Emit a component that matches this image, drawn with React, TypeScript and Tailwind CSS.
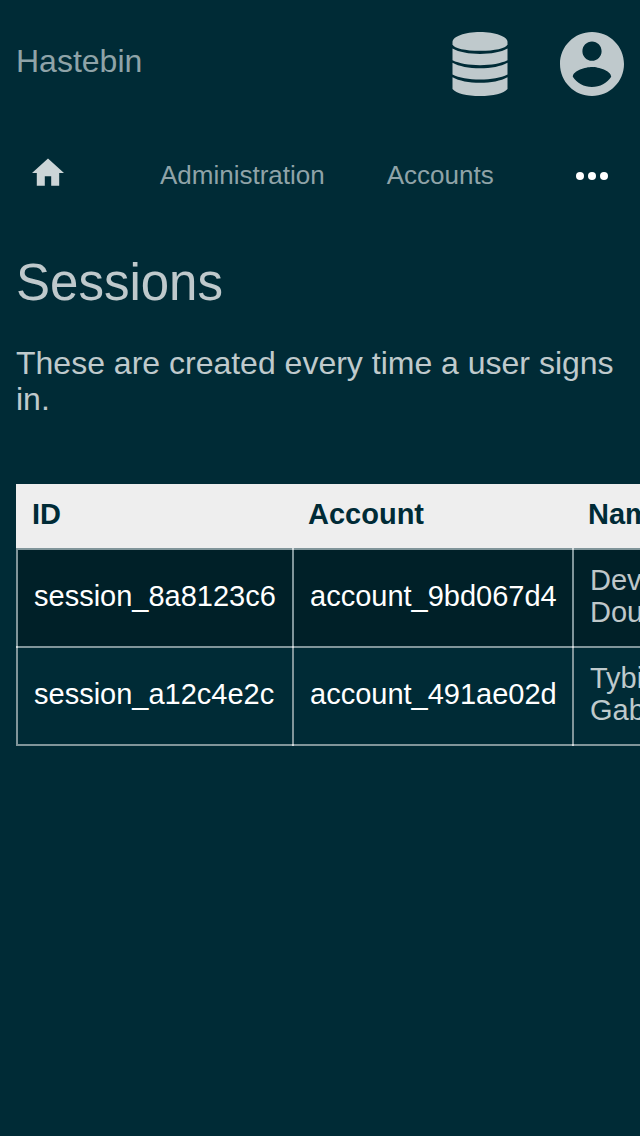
import { clsx } from "clsx";

const sessions = [
  { id: "session_8a8123c6", account: "account_9bd067d4", name: ["Devin", "Douglas"] },
  { id: "session_a12c4e2c", account: "account_491ae02d", name: ["Tybin", "Gabriel"] },
];

const cell = "relative border-l-2 border-t-2 border-[#80959a] px-4 pb-[18px] pt-3.5";
const topJoint =
  "before:absolute before:-left-0.5 before:-top-0.5 before:size-0.5 before:bg-[#d0d8da]";
const bottomJoint =
  "after:absolute after:-bottom-0.5 after:-left-0.5 after:size-0.5 after:bg-[#d0d8da]";

function DatabaseIcon() {
  return (
    <svg viewBox="0 0 56 64" className="h-16 w-14" fill="currentColor" aria-hidden="true">
      <path d="M.5 10C.5 4.500 12.800 0 28 0s27.500 4.500 27.500 10v2.500C53.500 16.500 43 18.800 28 18.800S2.500 16.500.5 12.500z" />
      <path d="M.5 16.600C7 20.300 17 22 28 22s21-1.700 27.500-5.400v11.700C49 31.500 39 33.200 28 33.200S7 31.500.5 28.300z" />
      <path d="M.5 30.800C7 34.500 17 36.300 28 36.300s21-1.800 27.500-5.500v11.700C49 45.800 39 47.500 28 47.500S7 45.800.5 42.500z" />
      <path d="M.5 45.200C7 48.900 17 50.700 28 50.700s21-1.800 27.500-5.500V57C52 61.500 41 64 28 64S4 61.500.5 57z" />
    </svg>
  );
}

function AccountIcon() {
  return (
    <svg viewBox="2 2 20 20" className="size-16" fill="currentColor" aria-hidden="true">
      <path d="M12 2C6.48 2 2 6.48 2 12s4.48 10 10 10 10-4.48 10-10S17.52 2 12 2zm0 3c1.66 0 3 1.34 3 3s-1.34 3-3 3-3-1.34-3-3 1.34-3 3-3zm0 14.2c-2.5 0-4.71-1.28-6-3.22.03-1.99 4-3.08 6-3.08 1.99 0 5.97 1.09 6 3.08-1.29 1.94-3.5 3.22-6 3.22z" />
    </svg>
  );
}

function HomeIcon() {
  return (
    <svg viewBox="2 2 20 20" className="size-8" fill="currentColor" aria-hidden="true">
      <path d="M10 20v-6h4v6h5v-8h3L12 3 2 12h3v8z" />
    </svg>
  );
}

function MoreIcon() {
  return (
    <svg viewBox="0 0 32 8" className="h-2 w-8" fill="currentColor" aria-hidden="true">
      <circle cx="4" cy="4" r="4" />
      <circle cx="16" cy="4" r="4" />
      <circle cx="28" cy="4" r="4" />
    </svg>
  );
}

export default function App() {
  return (
    <div className="min-h-screen bg-[#002b36] font-['Liberation_Sans',Arial,sans-serif] text-white/75">
      <header className="flex items-start justify-between px-4 pt-8">
        <a href="#" className="pt-[11px] text-[32px] leading-9 text-[#8fa3a8]">
          Hastebin
        </a>
        <div className="flex items-center gap-[52px]">
          <button type="button" aria-label="Databases">
            <DatabaseIcon />
          </button>
          <button type="button" aria-label="Account">
            <AccountIcon />
          </button>
        </div>
      </header>

      <nav className="flex h-[158px] items-center px-8 text-[26px] leading-8 text-[#8fa3a8]">
        <a href="#" aria-label="Home" className="pb-1 text-white/80">
          <HomeIcon />
        </a>
        <a href="#" className="ml-24">
          Administration
        </a>
        <a href="#" className="ml-[62px]">
          Accounts
        </a>
        <button type="button" aria-label="More" className="ml-auto pt-0.5 text-white">
          <MoreIcon />
        </button>
      </nav>

      <main className="pl-4">
        <h1 className="text-[51px] leading-[58px]">Sessions</h1>
        <p className="mt-[33px] pr-4 text-[32px] leading-9">
          These are created every time a user signs in.
        </p>
        <div className="mt-[67px] overflow-x-auto [scrollbar-width:none]">
          <table className="w-[724px] table-fixed border-separate border-spacing-0 text-left text-[29px] leading-8">
            <colgroup>
              <col className="w-[276px]" />
              <col className="w-[280px]" />
              <col />
            </colgroup>
            <thead className="bg-[#eeeeee] text-[#002b36]">
              <tr>
                <th className="px-4 pb-[18px] pt-3.5">ID</th>
                <th className="px-4 pb-[18px] pt-3.5">Account</th>
                <th className="px-4 pb-[18px] pt-3.5">Name</th>
              </tr>
            </thead>
            <tbody>
              {sessions.map((session, row) => {
                const last = row === sessions.length - 1;
                return (
                  <tr key={session.id} className="odd:bg-black/25">
                    <td className={clsx(cell, row > 0 && topJoint, last && "border-b-2")}>
                      <a href="#" className="text-white">
                        {session.id}
                      </a>
                    </td>
                    <td className={clsx(cell, topJoint, last && "border-b-2", last && bottomJoint)}>
                      <a href="#" className="text-white">
                        {session.account}
                      </a>
                    </td>
                    <td
                      className={clsx(
                        cell,
                        topJoint,
                        "border-r-2",
                        last && "border-b-2",
                        last && bottomJoint,
                      )}
                    >
                      {session.name[0]}
                      <br />
                      {session.name[1]}
                    </td>
                  </tr>
                );
              })}
            </tbody>
          </table>
        </div>
      </main>
    </div>
  );
}
